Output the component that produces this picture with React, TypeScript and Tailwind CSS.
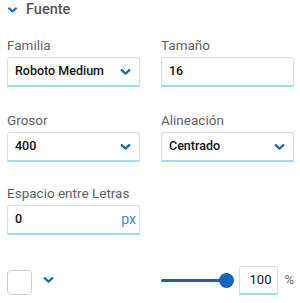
import React, { useState } from "react";

const Chevron = ({ className = "" }: { className?: string }) => (
  <svg viewBox="0 0 10 6" className={className} fill="none">
    <path d="M1.2 1.2l3.8 3.4 3.8-3.4" stroke="#1a6cb5" strokeWidth="2.4" strokeLinecap="round" strokeLinejoin="round" />
  </svg>
);

const Field = ({ label, value, select, unit }: { label: string; value: string; select?: boolean; unit?: string }) => (
  <div className="flex flex-col w-[133px]">
    <label className="text-[13.5px] leading-4 text-[#5f5f66]">{label}</label>
    <div className="mt-1 h-[30px] flex items-center justify-between pl-[7px] pr-[7px] border border-[#dcdcdc] border-b-2 border-b-[#9ddcf3] rounded-t-[3px] bg-white">
      <span className="text-[12.5px] font-medium text-[#111]">{value}</span>
      {select && <Chevron className="w-[11px] h-[6px] mr-[1px]" />}
      {unit && <span className="text-[14px] text-[#3f86c8] -mr-[4px]">{unit}</span>}
    </div>
  </div>
);

export default function App() {
  const [opacity] = useState(100);

  return (
    <div className="w-[300px] h-[303px] bg-white font-['Roboto',sans-serif] overflow-hidden">
      <div className="h-5 flex items-center pl-2 gap-[9px]">
        <Chevron className="w-[9px] h-[6px]" />
        <span className="text-[14.5px] font-medium text-[#555]">Fuente</span>
      </div>

      <div className="pl-[7px] pr-[6px]">
        <div className="flex justify-between mt-[17px]">
          <Field label="Familia" value="Roboto Medium" select />
          <Field label="Tamaño" value="16" />
        </div>
        <div className="flex justify-between mt-[25px]">
          <Field label="Grosor" value="400" select />
          <Field label="Alineación" value="Centrado" select />
        </div>
        <div className="flex mt-[23px]">
          <Field label="Espacio entre Letras" value="0" unit="px" />
        </div>

        <div className="flex items-center justify-between mt-[30px] h-[30px]">
          <div className="flex items-center gap-[11px]">
            <div className="w-[25px] h-[25px] mt-[5px] rounded-[4px] border border-[#cfcfcf] bg-white" />
            <Chevron className="w-[11px] h-[6px]" />
          </div>
          <div className="flex items-center">
            <div className="relative w-[73px] h-[15px] flex items-center">
              <div className="h-[3px] w-[65px] bg-[#20609c] rounded-full" />
              <div className="absolute right-0 top-0 w-[15px] h-[15px] rounded-full bg-[#1565c0]" />
            </div>
            <div className="ml-[5px] w-[39px] h-[29px] flex items-center justify-end pr-[6px] border border-[#dcdcdc] border-b-2 border-b-[#9ddcf3] rounded-t-[3px]">
              <span className="text-[13px] text-[#111]">{opacity}</span>
            </div>
            <span className="ml-[6px] text-[13px] text-[#666]">%</span>
          </div>
        </div>
      </div>
    </div>
  );
}
